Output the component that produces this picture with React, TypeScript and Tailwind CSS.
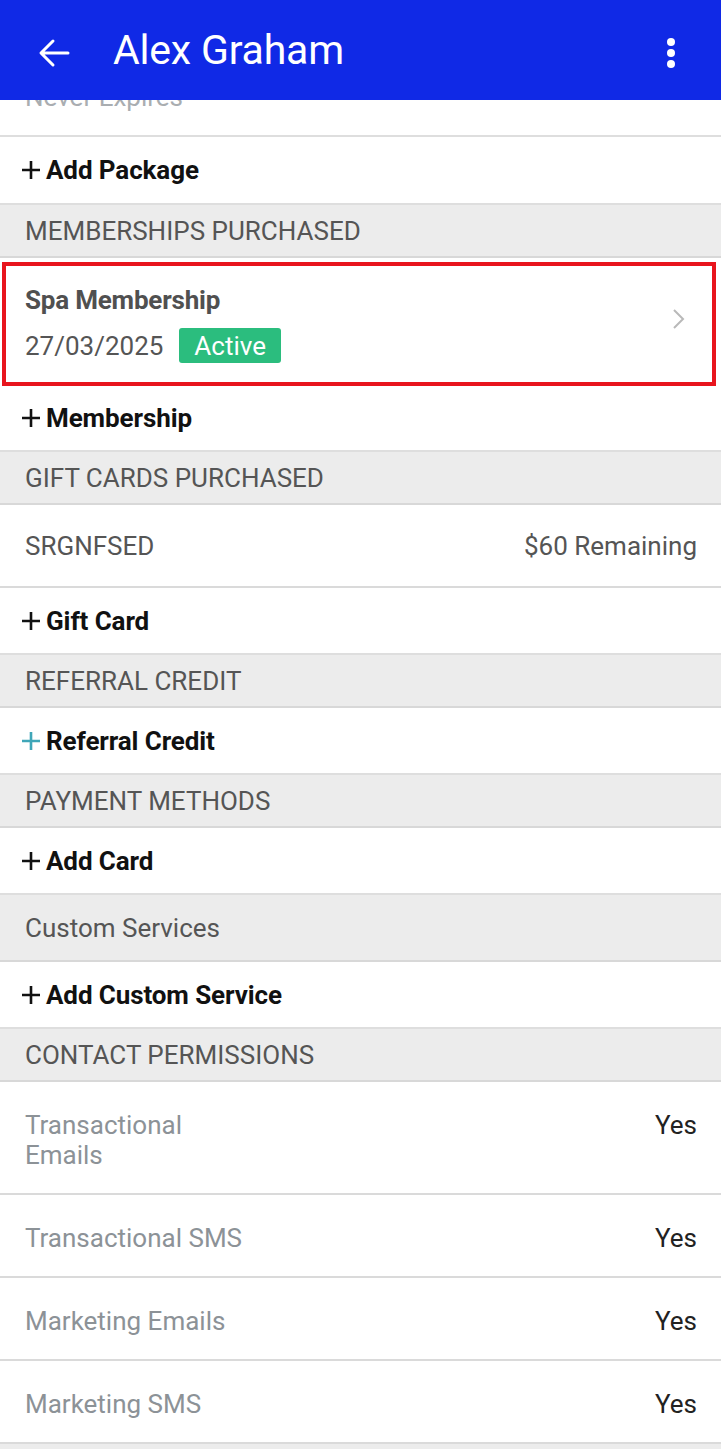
import React from "react";

const font = { fontFamily: "Roboto, 'Noto Sans', sans-serif" };

function Plus({ teal = false }: { teal?: boolean }) {
  return (
    <svg width="20" height="20" viewBox="0 0 20 20" className={teal ? "text-[#3fa6b8]" : "text-[#111111]"}>
      <path d="M10 1 V19 M1 10 H19" stroke="currentColor" strokeWidth="2.6" fill="none" />
    </svg>
  );
}

function AddRow({ label, teal = false, h = "h-[67px]" }: { label: string; teal?: boolean; h?: string }) {
  return (
    <div className={h + " flex items-center pl-[21px] gap-[5px] border-b-2 border-[#dedede] bg-white"}>
      <Plus teal={teal} />
      <span className="text-[26px] font-bold text-[#111111] leading-[30px] tracking-[-0.1px]">{label}</span>
    </div>
  );
}

function SectionHeader({ label, tall = false }: { label: string; tall?: boolean }) {
  return (
    <div
      className={
        (tall ? "h-[67px] " : "h-[53px] ") +
        "flex items-center px-[25px] bg-[#ececec] border-b-2 border-[#d8d8d8]"
      }
    >
      <span className="text-[26px] text-[#555555] leading-[30px]">{label}</span>
    </div>
  );
}

function PermRow({ label }: { label: string }) {
  return (
    <div className="flex items-start justify-between pl-[25px] pr-[24px] pt-[28px] pb-[23px] bg-white border-b-2 border-[#dadada]">
      <span className="text-[26px] leading-[30px] text-[#8c9297] max-w-[228px]">{label}</span>
      <span className="text-[26px] leading-[30px] text-[#222222]">Yes</span>
    </div>
  );
}

export default function App() {
  return (
    <div className="relative w-[721px] h-[1449px] overflow-hidden bg-[#ececec]" style={font}>
      {/* Top app bar (overlays scrolled content) */}
      <div className="absolute top-0 left-0 right-0 h-[100px] bg-[#1029e6] z-10 flex items-center pl-[38px] pr-[46px]">
        <svg width="32" height="32" viewBox="0 0 32 32" className="text-white shrink-0 mt-[6px]">
          <path d="M30 16 H4 M15 4 L3 16 L15 28" stroke="currentColor" strokeWidth="3" fill="none" strokeLinecap="round" strokeLinejoin="round" />
        </svg>
        <span className="ml-[43px] text-[41px] text-white leading-[46px] tracking-[-0.2px]">Alex Graham</span>
        <div className="ml-auto flex flex-col items-center gap-[3px] mt-[6px]">
          <span className="w-[8px] h-[8px] rounded-full bg-white" />
          <span className="w-[8px] h-[8px] rounded-full bg-white" />
          <span className="w-[8px] h-[8px] rounded-full bg-white" />
        </div>
      </div>

      {/* Scrolled content */}
      <div className="flex flex-col">
        <div className="h-[137px] pt-[82px] px-[25px] bg-white border-b-2 border-[#dedede]">
          <span className="text-[26px] leading-[30px] text-[#a9adb1]">Never Expires</span>
        </div>

        <AddRow label="Add Package" h="h-[68px]" />
        <SectionHeader label="MEMBERSHIPS PURCHASED" />

        <div className="bg-white pt-[4px] pl-[2px] pr-[5px]">
          <div className="h-[124px] border-[4px] border-[#e8151d] flex items-center pl-[19px] pr-[26px]">
            <div className="flex flex-col flex-1">
              <span className="text-[26px] font-bold text-[#505050] leading-[30px] tracking-[-0.2px]">Spa Membership</span>
              <div className="flex items-center mt-[13px]">
                <span className="text-[26px] text-[#555555] leading-[30px]">27/03/2025</span>
                <span className="ml-[16px] h-[35px] px-[15px] flex items-center rounded-[3px] bg-[#2bbd7e] text-white text-[26px] leading-[30px]">
                  Active
                </span>
              </div>
            </div>
            <svg width="14" height="22" viewBox="0 0 14 22" className="text-[#b9b9b9] mb-[10px]">
              <path d="M2 2 L11 11 L2 20" stroke="currentColor" strokeWidth="2" fill="none" />
            </svg>
          </div>
        </div>

        <AddRow label="Membership" h="h-[66px]" />
        <SectionHeader label="GIFT CARDS PURCHASED" />

        <div className="h-[83px] flex items-center justify-between pl-[25px] pr-[24px] bg-white border-b-2 border-[#dadada]">
          <span className="text-[26px] leading-[30px] text-[#555555]">SRGNFSED</span>
          <span className="text-[26px] leading-[30px] text-[#555555]">$60 Remaining</span>
        </div>

        <AddRow label="Gift Card" />
        <SectionHeader label="REFERRAL CREDIT" />
        <AddRow label="Referral Credit" teal />
        <SectionHeader label="PAYMENT METHODS" />
        <AddRow label="Add Card" />
        <SectionHeader label="Custom Services" tall />
        <AddRow label="Add Custom Service" />
        <SectionHeader label="CONTACT PERMISSIONS" />

        <PermRow label="Transactional Emails" />
        <PermRow label="Transactional SMS" />
        <PermRow label="Marketing Emails" />
        <PermRow label="Marketing SMS" />
      </div>
    </div>
  );
}
